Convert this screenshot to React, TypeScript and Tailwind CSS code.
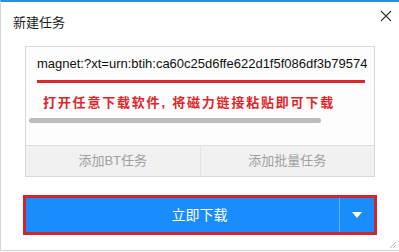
import React from "react";

export default function App() {
  return (
    <div
      className="w-[399px] h-[252px] bg-white overflow-hidden"
      style={{ fontFamily: '"Liberation Sans", "Noto Sans CJK SC", sans-serif' }}
    >
      <div className="relative w-[399px] h-[251px] border-t-2 border-t-[#2b8fd6] border-l border-l-[#d6d6d6] border-b border-b-[#cfcfcf] flex flex-col">
        {/* title row */}
        <div className="h-[44px] flex items-start justify-between">
          <div className="pl-[12px] pt-[13px] text-[13px] leading-[16px] text-[#222]">新建任务</div>
          <svg className="mt-[8px] mr-[7px]" width="12" height="12" viewBox="0 0 12 12">
            <path d="M1 1 L11 11 M11 1 L1 11" stroke="#333" strokeWidth="1.1" fill="none" />
          </svg>
        </div>
        {/* input box */}
        <div className="ml-[24px] w-[350px] h-[131px] border border-[#d9d9d9] flex flex-col">
          <div className="h-[98px] bg-[#fdfdfd] flex flex-col">
            <div className="pl-[11px] pt-[9px] h-[33px] text-[13px] leading-[16px] text-[#111] whitespace-nowrap overflow-hidden w-[341px]">
              magnet:?xt=urn:btih:ca60c25d6ffe622d1f5f086df3b79574c9d2ea1a
            </div>
            <div className="ml-[11px] w-[328px] h-[3px] bg-[#d9252b]" />
            <div className="pl-[17px] pt-[12px] h-[35px] text-[13px] leading-[16px] font-bold tracking-[1.8px] text-[#e0262b] whitespace-nowrap">
              打开任意下载软件, 将磁力链接粘贴即可下载
            </div>
            <div className="ml-[3px] w-[292px] h-[5px] rounded-full bg-[#bcbcbc]" />
          </div>
          <div className="flex-1 border-t border-[#dedede] bg-[#f1f1f1] flex">
            <div className="flex-1 flex items-center justify-center text-[13px] text-[#a0a0a0] border-r border-[#e4e4e4]">
              添加BT任务
            </div>
            <div className="flex-1 flex items-center justify-center text-[13px] text-[#a0a0a0]">
              添加批量任务
            </div>
          </div>
        </div>
        {/* download button */}
        <div className="ml-[22px] mt-[18px] w-[354px] h-[40px] border-[3px] border-[#d5242e] bg-[#1a8dfd] flex">
          <div className="flex-1 pl-[34px] flex items-center justify-center text-[14px] text-white">
            立即下载
          </div>
          <div className="w-[35px] border-l border-[#66b2ff] flex items-center justify-center">
            <svg width="10" height="6" viewBox="0 0 10 6">
              <path d="M0 0 L10 0 L5 6 Z" fill="#ffffff" />
            </svg>
          </div>
        </div>
        {/* resize grip */}
        <svg className="absolute right-[2px] bottom-[1px]" width="8" height="8" viewBox="0 0 8 8">
          <path d="M7 1 L1 7 M7 4 L4 7 M7 6.5 L6.5 7" stroke="#a0a0a0" strokeWidth="0.8" />
        </svg>
      </div>
    </div>
  );
}
